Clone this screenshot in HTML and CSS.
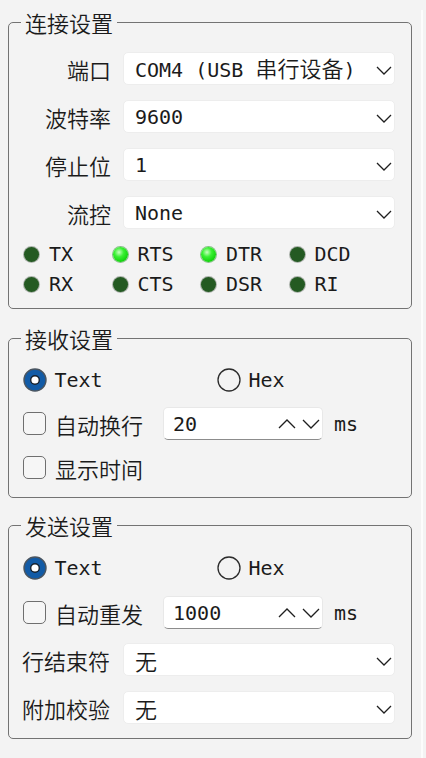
FILE: index.html
```html
<!DOCTYPE html>
<html lang="zh-CN">
<head>
    <meta charset="UTF-8">
    <meta name="viewport" content="width=device-width, initial-scale=1.0">
    <title>串口设置</title>
    <link rel="stylesheet" href="styles.css">
</head>
<body>

<div class="panel">

    <!-- 连接设置 -->
    <fieldset class="group group-conn">
        <legend>连接设置</legend>

        <div class="form form-right">
            <span class="label">端口</span>
            <div class="combo">
                <span class="value">COM4 (USB <span class="cjk">串行设备</span>)</span>
                <svg class="chevron" viewBox="0 0 16 9"><polyline points="1,1 8,8 15,1"/></svg>
            </div>

            <span class="label">波特率</span>
            <div class="combo">
                <span class="value">9600</span>
                <svg class="chevron" viewBox="0 0 16 9"><polyline points="1,1 8,8 15,1"/></svg>
            </div>

            <span class="label">停止位</span>
            <div class="combo">
                <span class="value">1</span>
                <svg class="chevron" viewBox="0 0 16 9"><polyline points="1,1 8,8 15,1"/></svg>
            </div>

            <span class="label">流控</span>
            <div class="combo">
                <span class="value">None</span>
                <svg class="chevron" viewBox="0 0 16 9"><polyline points="1,1 8,8 15,1"/></svg>
            </div>
        </div>

        <div class="leds">
            <div class="led-item"><span class="led"></span>TX</div>
            <div class="led-item"><span class="led on"></span>RTS</div>
            <div class="led-item"><span class="led on"></span>DTR</div>
            <div class="led-item"><span class="led"></span>DCD</div>
            <div class="led-item"><span class="led"></span>RX</div>
            <div class="led-item"><span class="led"></span>CTS</div>
            <div class="led-item"><span class="led"></span>DSR</div>
            <div class="led-item"><span class="led"></span>RI</div>
        </div>
    </fieldset>

    <!-- 接收设置 -->
    <fieldset class="group group-recv">
        <legend>接收设置</legend>

        <div class="choice-row">
            <div class="option">
                <svg class="radio" viewBox="0 0 24 24">
                    <circle cx="12" cy="12" r="11" class="radio-ring-on"/>
                    <circle cx="12" cy="12" r="4.3" class="radio-dot"/>
                </svg>
                <span class="text">Text</span>
            </div>
            <div class="option">
                <svg class="radio" viewBox="0 0 24 24">
                    <circle cx="12" cy="12" r="11" class="radio-ring"/>
                </svg>
                <span class="text">Hex</span>
            </div>
        </div>

        <div class="check-row">
            <span class="checkbox"></span>
            <span class="label">自动换行</span>
            <div class="spin">
                <span class="value">20</span>
                <span class="spin-arrows">
                    <svg viewBox="0 0 18 10"><polyline points="1,9 9,1 17,9"/></svg>
                    <svg viewBox="0 0 18 10"><polyline points="1,1 9,9 17,1"/></svg>
                </span>
            </div>
            <span class="text">ms</span>
        </div>

        <div class="check-row">
            <span class="checkbox"></span>
            <span class="label">显示时间</span>
        </div>
    </fieldset>

    <!-- 发送设置 -->
    <fieldset class="group group-send">
        <legend>发送设置</legend>

        <div class="choice-row">
            <div class="option">
                <svg class="radio" viewBox="0 0 24 24">
                    <circle cx="12" cy="12" r="11" class="radio-ring-on"/>
                    <circle cx="12" cy="12" r="4.3" class="radio-dot"/>
                </svg>
                <span class="text">Text</span>
            </div>
            <div class="option">
                <svg class="radio" viewBox="0 0 24 24">
                    <circle cx="12" cy="12" r="11" class="radio-ring"/>
                </svg>
                <span class="text">Hex</span>
            </div>
        </div>

        <div class="check-row">
            <span class="checkbox"></span>
            <span class="label">自动重发</span>
            <div class="spin">
                <span class="value">1000</span>
                <span class="spin-arrows">
                    <svg viewBox="0 0 18 10"><polyline points="1,9 9,1 17,9"/></svg>
                    <svg viewBox="0 0 18 10"><polyline points="1,1 9,9 17,1"/></svg>
                </span>
            </div>
            <span class="text">ms</span>
        </div>

        <div class="form form-left">
            <span class="label">行结束符</span>
            <div class="combo">
                <span class="value cjk">无</span>
                <svg class="chevron" viewBox="0 0 16 9"><polyline points="1,1 8,8 15,1"/></svg>
            </div>

            <span class="label">附加校验</span>
            <div class="combo">
                <span class="value cjk">无</span>
                <svg class="chevron" viewBox="0 0 16 9"><polyline points="1,1 8,8 15,1"/></svg>
            </div>
        </div>
    </fieldset>

</div>

</body>
</html>
```

FILE: styles.css
```css
/* Reset some styles */
* {
    margin: 0;
    padding: 0;
    box-sizing: border-box;
}

body {
    font-family: "DejaVu Sans Mono", "Noto Sans CJK SC", monospace;
    font-size: 20px;
    color: #1b1b1b;
    /* thin light edge of the scroll area on the right */
    background:
        linear-gradient(to right, transparent 421px, #fcfcfc 421px, #fcfcfc 423px, transparent 423px) no-repeat 0 10px / 100% 100%,
        #f3f3f3;
    height: 100vh;
}

.panel {
    padding: 8px 0 0 8px;
}

.cjk {
    font-family: "Noto Sans CJK SC", sans-serif;
    font-size: 22px;
    font-weight: 350;
}

/* Group boxes */
.group {
    width: 404px;
    border: 1px solid #737373;
    border-radius: 5px;
    padding: 16px 15px 9px 14px;
}

.group legend {
    font-family: "Noto Sans CJK SC", sans-serif;
    font-size: 22px;
    font-weight: 350;
    line-height: 28px;
    height: 28px;
    padding: 0 4px;
    margin-left: -2px;
}

.group-recv {
    margin-top: 15px;
    padding: 11px 15px 13px 14px;
}

.group-send {
    margin-top: 13px;
    padding: 12px 15px 14px 14px;
}

/* Label + combo grid */
.form {
    display: grid;
    grid-template-columns: 88px 272px;
    column-gap: 12px;
    row-gap: 15px;
    align-items: center;
}

.label {
    font-family: "Noto Sans CJK SC", sans-serif;
    font-size: 22px;
    font-weight: 350;
    line-height: 30px;
    white-space: nowrap;
}

.form-right .label {
    text-align: right;
}

.form-left {
    margin-top: 14px;
}

.form-left .label {
    margin-left: -1px;
}

.combo {
    height: 33px;
    background-color: #ffffff;
    border: 1px solid #ededed;
    border-radius: 5px;
    display: flex;
    align-items: center;
    justify-content: space-between;
    padding: 0 2px 0 11px;
}

.combo .value {
    white-space: nowrap;
    line-height: 30px;
}

.chevron {
    width: 16px;
    height: 9px;
    margin-top: 3px;
}

.chevron polyline,
.spin-arrows polyline {
    fill: none;
    stroke: #1f1f1f;
    stroke-width: 1.3;
}

/* Signal lamps */
.leds {
    display: grid;
    grid-template-columns: repeat(4, 88.5px);
    grid-auto-rows: 30px;
    margin-top: 10px;
    margin-left: 1px;
}

.led-item {
    display: flex;
    align-items: center;
    gap: 10px;
}

.led {
    width: 15px;
    height: 15px;
    border-radius: 50%;
    background-color: #245a22;
    box-shadow: 0 0 0 1px rgba(40, 60, 40, 0.35);
}

.led.on {
    background: radial-gradient(circle at 40% 35%, #c8ffc0 0, #39f033 35%, #14d40f 70%, #0fa00c 100%);
    box-shadow: 0 0 0 1px rgba(30, 140, 30, 0.5);
}

/* Radio buttons */
.choice-row {
    display: grid;
    grid-template-columns: 194px auto;
    height: 33px;
    align-items: center;
}

.option {
    display: flex;
    align-items: center;
    gap: 8px;
}

.radio {
    width: 24px;
    height: 24px;
    margin-left: -0.5px;
}

.radio-ring {
    fill: none;
    stroke: #2b2b2b;
    stroke-width: 1.3;
}

.radio-ring-on {
    fill: #125ba6;
    stroke: #4a5560;
    stroke-width: 1.4;
}

.radio-dot {
    fill: #ffffff;
    stroke: #16202c;
    stroke-width: 1.4;
}

/* Checkbox rows */
.check-row {
    display: flex;
    align-items: center;
    height: 33px;
    margin-top: 11px;
}

.group-send .check-row {
    margin-top: 12px;
}

.checkbox {
    width: 23px;
    height: 23px;
    border: 1.5px solid #6f6f6f;
    border-radius: 5px;
    background-color: #f6f6f6;
    margin-right: 9px;
}

.check-row .label {
    margin-right: 20px;
}

.spin {
    width: 160px;
    height: 33px;
    background-color: #ffffff;
    border: 1px solid #e8e8e8;
    border-bottom-color: #8c8c8c;
    border-radius: 5px;
    display: flex;
    align-items: center;
    justify-content: space-between;
    padding: 0 2px 0 9px;
    margin-right: 11px;
}

.spin-arrows {
    display: flex;
    gap: 6px;
}

.spin-arrows svg {
    width: 18px;
    height: 10px;
}
```
